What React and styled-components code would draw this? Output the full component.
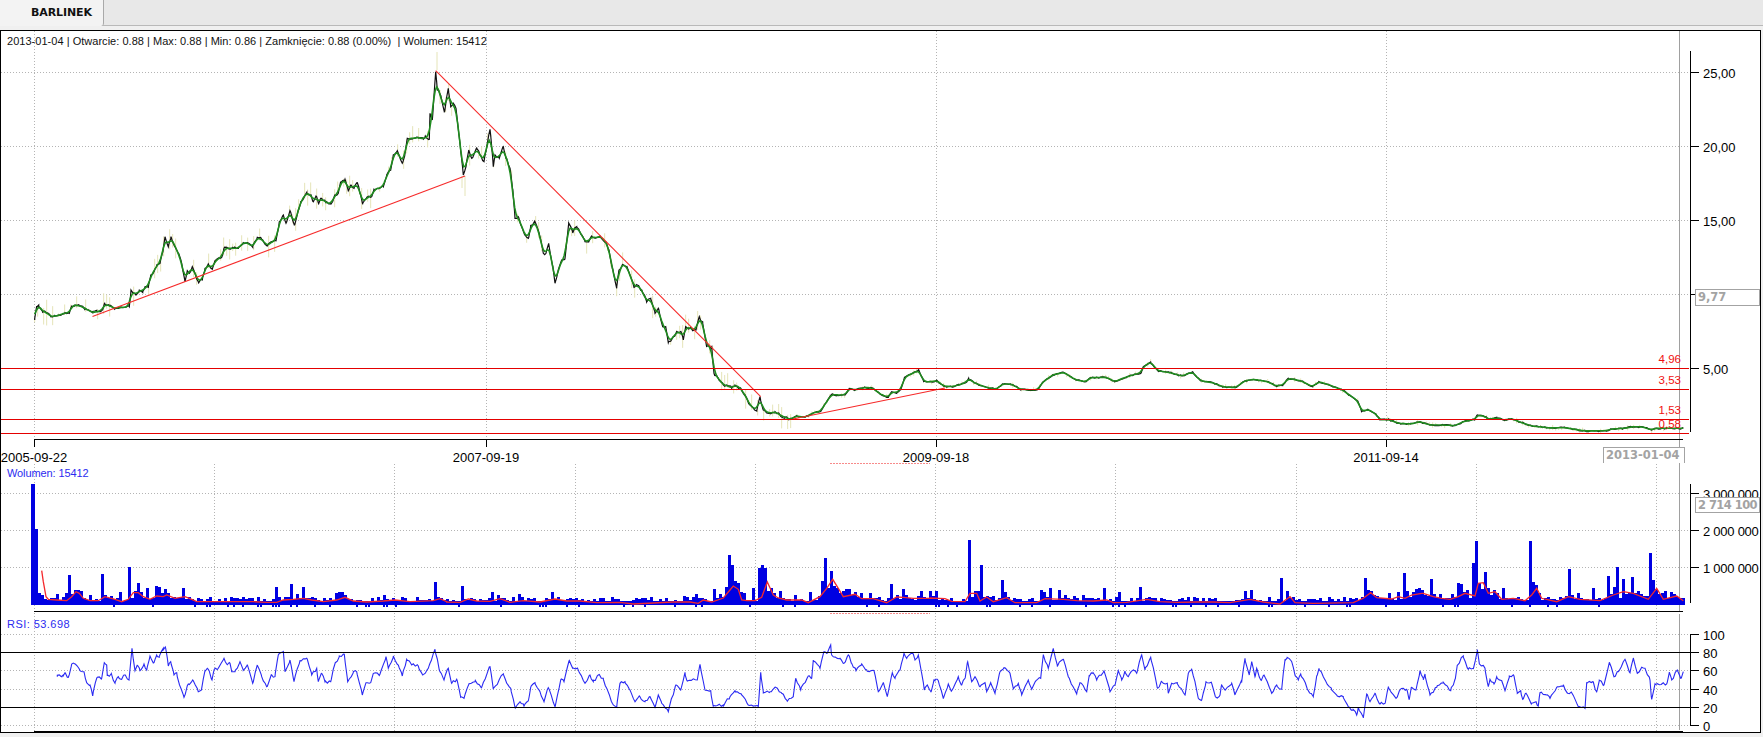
import React from 'react';
import styled, { createGlobalStyle } from 'styled-components';

const GlobalStyle = createGlobalStyle`
  html, body {
    margin: 0;
    padding: 0;
    background: #f0f0f0;
    overflow: hidden;
  }
`;

const LABEL_FONT = '"Liberation Sans", Arial, sans-serif';
const BOLD_FONT = '"DejaVu Sans", Verdana, sans-serif';

// traced points are written in the coordinates of a crop, trace() brings them back to the page
const trace = (ox, oy, pts, sx = 3) =>
  pts
    .trim()
    .split(/\s+/)
    .map(p => {
      const [x, y] = p.split(',').map(Number);
      return [ox + x / sx, oy + y / 3];
    });

const PRICE = [
  ...trace(30, 60, `14,780 20,738 26,735 38,755 50,758 62,770 75,768 90,765 105,758 118,760 125,738 135,735 150,738 165,745 188,758 200,755 215,752 224,732 240,738 255,745 275,742 298,740 303,690 310,698 318,705 328,690 338,695 345,680 355,682 362,645 372,635 380,615 390,610 398,575 405,530 415,560 423,530 435,560 445,580 455,610 465,665 472,632 478,640 487,620 495,640 505,665 517,660 525,625 535,612 547,628 555,602 575,592 582,565 595,565 610,565 625,565 640,548 652,548 668,562 682,532 695,538 712,558 725,545 738,542 748,485 760,465 768,490 780,452 793,495 805,450 812,425 830,398 843,405 850,425 858,408 865,428 875,415 888,428 903,432 915,405 925,400 932,368 945,358 955,392 963,375 972,385 982,368 990,400 998,430 1010,412 1025,410 1032,388 1045,385 1060,380 1070,345 1082,330 1090,285 1102,272 1117,310 1125,280 1132,235 1150,235 1165,232 1180,238 1186,228 1198,238 1200,160 1207,180 1217,35 1222,90 1232,105 1243,155 1255,85 1262,140 1270,130 1278,145 1290,250 1300,345 1308,320 1316,270 1325,295 1340,265 1350,285 1362,305 1370,262 1380,208 1390,320 1395,285 1408,295 1420,260 1428,295 1440,325`),
  ...trace(440, 110, `218,240 225,325 235,320 245,350 255,375 265,385 272,350 285,335 297,368 310,430 318,430 326,400 338,470 345,520 355,480 365,450 375,445 386,340 398,365 410,350 425,375 435,395 445,395 455,378 465,385 480,378 497,395 507,420 518,480 530,535 537,480 548,462 560,470 570,495 582,532 592,525 605,540 620,575 632,565 645,610 655,595 668,650 677,650 685,698 700,680 712,665 722,665 730,690 737,650 750,655 768,660 778,620 788,640 800,708 815,710 822,790 835,805 850,825 865,828 875,835 885,825 900,833`),
  ...trace(450, 280, `885,345 900,375 920,392 930,350 940,390 960,400 975,395 990,405 1005,412 1020,418 1040,408 1065,412 1090,398 1110,395 1130,365 1145,343 1160,345 1185,345 1198,325 1215,330 1245,322 1270,325 1290,342 1315,352 1325,335 1340,338 1350,330`),
  ...trace(780, 340, `297,145 305,112 325,100 340,90 352,125 370,125 385,122 400,138 420,140 438,135 455,128 462,115 475,128 500,140 530,148 545,132 565,132 590,148 630,150 645,125 668,105 695,97 725,120 750,125 760,113 800,112 820,125 850,110 885,98 890,80 908,66 925,92 955,98 985,108 1010,96 1030,122 1060,128 1085,140 1115,143 1140,122 1160,118 1195,125 1215,138 1232,135 1245,115 1275,122 1305,140 1320,125 1345,135 1375,148 1395,165 1415,182 1425,215 1440,208 1460,222 1470,240 1490,238 1515,250 1545,252`, 2.45),
  ...trace(1400, 300, `60,365 90,375 130,375 165,377 190,365 225,358 232,345 258,350 265,358 290,354 315,360 335,356 365,368 395,378 415,380 450,384 495,383 555,393 620,392 635,387 670,385 700,380 730,381 755,390 765,385 850,385`),
];

const VOLUME_MA = [
  ...trace(0, 540, `125,92 130,125 138,170 145,178 170,180 200,182 215,170 228,155 238,160 250,175 270,182 295,182 315,170 345,178 365,185 385,178 400,158 415,158 430,170 450,178 470,168 490,170 500,165 525,175 555,170 575,178 590,185 650,185 700,185 760,185 800,187 830,187 850,180 880,178 910,175 935,180 970,185 1010,180 1035,172 1060,183 1100,186 1150,183 1185,180 1230,185 1300,182 1320,176 1340,185`),
  ...trace(440, 500, `20,306 60,307 85,297 110,303 150,304 180,296 210,307 250,302 300,306 345,297 380,303 420,303 470,308 540,307 580,312 640,309 700,306 750,306 775,310 790,300 815,306 850,294 870,270 880,258 895,268 905,300 920,302 945,302 965,292 982,246 1000,285 1015,294 1040,300 1085,300 1105,308 1140,290 1160,265 1178,238 1195,265 1210,290 1245,283 1265,296 1300,296 1340,308 1370,291 1390,292 1420,295 1470,295`),
  ...trace(930, 500, `0,294 45,296 65,304 105,305 120,280 140,280 150,303 170,291 190,305 230,293 255,308 320,308 345,296 400,298 440,302 490,303 530,300 550,308 590,307 650,298 690,305 740,307 800,306 850,306 900,308 960,298 1000,306 1050,312 1080,290 1095,308 1150,310 1270,308 1300,295 1322,278 1340,293 1385,297 1405,290 1425,295 1445,285 1475,280`),
  ...trace(1400, 530, `70,190 100,200 125,205 150,208 175,200 195,190 225,198 235,160 250,158 265,190 285,185 305,208 340,205 375,212 395,195 410,175 425,205 470,215 505,200 540,208 600,212 640,195 670,185 700,190 745,208 770,175 790,208 830,198 850,212`),
];

const VOLUME_SPIKES = [
  ...trace(0, 540, `115,160 125,165 172,162 200,160 212,105 222,155 235,160 275,165 308,102 320,165 365,155 392,82 414,128 425,160 441,145 470,138 482,142 492,148 505,160 550,145 565,170 680,178 715,175 830,142 875,132 893,162 908,142 935,172 1005,160 1015,155 1030,155 1155,165 1305,126 1345,182`),
  ...trace(440, 500, `68,258 158,276 178,285 218,292 240,282 275,298 320,294 338,276 412,295 430,298 460,298 494,295 527,298 622,300 680,295 730,288 742,290 773,282 795,298 825,268 840,282 858,262 870,165 877,195 915,280 942,264 960,205 966,195 976,205 996,275 1025,274 1062,285 1115,276 1143,243 1152,204 1158,175 1170,213 1183,258 1195,265 1218,268 1230,268 1245,280 1265,280 1288,280 1352,252 1370,285 1387,268 1400,285 1445,274 1468,274 1490,274`),
  ...trace(930, 500, `5,285 20,274 116,120 152,195 192,288 216,240 226,276 270,300 305,300 332,270 342,275 365,264 390,270 408,285 432,288 462,285 527,264 566,276 603,295 632,261 660,291 680,295 705,298 798,295 850,297 860,295 915,300 942,273 962,270 1058,234 1070,274 1165,300 1272,302 1305,234 1315,270 1340,288 1380,280 1405,276 1425,219 1435,274 1460,266 1470,264`),
  ...trace(1400, 530, `15,128 50,176 62,174 95,146 125,192 158,192 172,160 182,162 205,180 218,100 227,33 257,126 268,175 308,174 350,208 390,33 400,155 410,198 505,116 510,182 533,188 580,174 622,138 640,170 656,112 670,148 696,140 712,184 750,68 760,150 770,190 800,184 815,186 830,200`),
];

const RSI = [
  ...trace(0, 540, `172,410 190,405 195,398 205,412 215,372 225,372 240,392 252,395 260,428 270,435 278,468 290,415 305,415 313,368 320,375 322,408 333,402 345,430 355,410 365,418 372,405 387,420 396,325 405,392 412,375 420,392 432,372 440,390 450,348 462,368 470,345 478,352 490,325 497,325 505,378 512,365 522,405 530,398 538,432 552,472 565,432 578,420 595,455 605,445 615,392 625,388 636,420 643,388 655,385 672,355 680,372 690,370 695,395 705,395 720,365 730,390 742,375 758,430 772,375 785,410 800,440 815,405 825,410 835,345 850,335 855,395 870,360 882,425 900,362 920,355 935,405 950,385 955,425 965,400 975,425 992,425 1003,378 1018,350 1033,343 1043,425 1060,398 1070,395 1087,465 1098,428 1112,428 1120,400 1140,402 1158,350 1165,385 1180,352 1195,375 1207,408 1220,358 1235,375 1255,378 1268,405 1285,385 1290,370 1305,328 1320,395 1332,420`),
  ...trace(440, 500, `25,505 35,550 50,538 62,592 72,595 88,550 105,545 125,562 150,500 160,568 190,522 200,550 212,565 225,622 240,605 252,618 265,603 272,562 285,548 300,575 312,605 325,563 345,620 362,540 372,545 387,483 398,505 412,505 435,550 450,525 460,545 475,525 490,535 500,565 517,610 530,622 540,550 555,545 570,570 585,605 600,590 615,605 630,590 645,622 655,585 665,610 685,635 697,590 708,555 722,570 735,517 740,540 772,540 780,493 795,570 812,572 820,620 850,615 870,590 885,572 905,585 925,615 955,620 962,517 970,575 990,575 1005,562 1025,580 1040,600 1060,590 1067,535 1082,570 1105,528 1115,535 1120,480 1140,505 1152,455 1160,460 1172,435 1175,465 1200,475 1212,490 1225,465 1235,490 1248,512 1265,492 1280,510 1302,512 1315,575 1330,548 1342,590 1357,518 1365,535 1380,510 1392,460 1400,475 1418,460 1425,480 1435,465 1445,520 1453,570 1462,555 1473,575 1482,540`),
  ...trace(930, 500, `15,542 25,542 40,595 55,552 65,572 85,530 95,555 105,535 113,485 125,545 135,530 150,560 165,548 170,575 182,548 195,580 210,515 222,503 240,520 250,565 265,550 275,585 295,540 305,568 320,540 332,535 340,465 355,505 370,445 382,495 400,478 415,530 440,582 450,548 470,575 478,525 490,520 500,540 522,513 540,575 555,555 565,512 575,540 585,513 595,530 610,510 620,520 635,465 645,510 662,472 683,565 695,545 712,550 715,580 725,550 742,548 765,585 775,520 785,508 795,545 805,595 815,600 828,545 845,550 858,592 870,585 875,555 885,570 905,550 915,585 935,545 945,475 958,525 965,485 975,530 980,505 992,540 1002,525 1025,580 1040,555 1055,568 1065,480 1072,473 1085,485 1095,525 1105,540 1112,522 1140,580 1150,590 1160,528 1167,505 1185,540 1205,570 1220,585 1240,590 1255,620 1270,630 1280,645 1285,622 1300,652 1310,582 1320,605 1335,580 1350,612 1365,610 1375,562 1398,595 1410,570 1430,568 1437,598 1445,562 1458,570 1470,512 1480,535`),
  ...trace(1400, 530, `75,432 90,495 110,472 130,458 152,482 165,448 172,405 190,378 205,418 220,415 232,362 238,400 255,415 265,470 270,448 282,462 290,440 305,452 315,482 328,442 342,438 352,488 362,482 368,508 378,490 395,520 408,515 415,528 420,488 440,495 450,505 470,472 490,468 503,490 515,488 535,530 555,535 560,458 578,455 590,485 598,452 612,465 628,398 642,440 655,425 675,388 690,428 700,385 712,430 725,412 735,415 750,450 755,508 765,462 785,462 800,462 808,428 815,450 832,420 842,445 850,425`),
];

const random = seed => () => {
  seed = (seed * 16807) % 2147483647;
  return (seed - 1) / 2147483646;
};

const toPoints = pts => pts.map(([x, y]) => `${x.toFixed(1)},${y.toFixed(1)}`).join(' ');

const yAt = (pts, x) => {
  if (x <= pts[0][0]) return pts[0][1];
  for (let i = 1; i < pts.length; i++) {
    if (pts[i][0] >= x) {
      const [x0, y0] = pts[i - 1];
      const [x1, y1] = pts[i];
      return x1 === x0 ? y1 : y0 + ((y1 - y0) * (x - x0)) / (x1 - x0);
    }
  }
  return pts[pts.length - 1][1];
};

const resample = (pts, step) => {
  const out = [];
  for (let x = pts[0][0]; x <= pts[pts.length - 1][0]; x += step) out.push([x, yAt(pts, x)]);
  return out;
};

const smooth = (pts, reach) =>
  pts.map(([x], i) => {
    let sum = 0;
    let weight = 0;
    for (let k = -reach; k <= reach; k++) {
      const p = pts[i + k];
      if (!p) continue;
      const w = reach + 1 - Math.abs(k);
      sum += p[1] * w;
      weight += w;
    }
    return [x, sum / weight];
  });

// samples get a little noise, the traced corners stay where they are so the peaks are kept
const roughen = (pts, seed, step, size) => {
  const rnd = random(seed);
  const noisy = resample(pts, step).map(([x, y]) => [x, y + (rnd() - 0.5) * size(x)]);
  return [...pts, ...noisy].sort((a, b) => a[0] - b[0]);
};

const priceSamples = resample(PRICE, 1.5);
const priceGreen = smooth(priceSamples, 2);
const priceBlack = roughen(PRICE, 311, 2, x => (x < 790 ? 3 : 1.5));
const rsiLine = roughen(RSI, 913, 2, () => 3);

const wicks = (() => {
  const rnd = random(77);
  const list = [];
  priceSamples.forEach(([x, y], i) => {
    if (i % 2 || rnd() > 0.55) return;
    const size = x < 800 ? 13 : 3;
    list.push([x, y - rnd() * size, y + rnd() * size]);
  });
  list.push([437, 52, 70], [465, 176, 196], [462, 176, 188], [440, 90, 104]);
  return list;
})();

const volumeBars = (() => {
  const rnd = random(4242);
  const bars = [];
  for (let x = 38; x < 1683; x += 3) {
    const ma = 605 - yAt(VOLUME_MA, Math.max(x, 50));
    const bump = rnd() < 0.45 ? 1 + rnd() * 3 : 0;
    const top = 605 - Math.max(4 + bump, Math.min(ma, 20) * (0.6 + rnd() * 0.8));
    bars.push({ x, top, nub: rnd() < 0.16 && x > 110 && ma < 8 });
  }
  VOLUME_SPIKES.forEach(([x, top]) => {
    const bar = bars[Math.max(0, Math.round((x - 39.5) / 3))];
    if (bar) bar.top = Math.min(bar.top, top);
  });
  return bars;
})();

const PRICE_TICKS = [
  { y: 72, label: '25,00' },
  { y: 146, label: '20,00' },
  { y: 220, label: '15,00' },
  { y: 294, label: '' },
  { y: 368, label: '5,00' },
];
const LEVELS = [
  { y: 368, label: '4,96', labelY: 359 },
  { y: 389, label: '3,53', labelY: 380 },
  { y: 419, label: '1,53', labelY: 410 },
  { y: 433, label: '0,58', labelY: 424 },
];
const DATE_TICKS = [
  { x: 34, label: '2005-09-22' },
  { x: 486, label: '2007-09-19' },
  { x: 936, label: '2009-09-18' },
  { x: 1386, label: '2011-09-14' },
];
const LOWER_GRID_X = [34, 214, 394, 575, 755, 935, 1115, 1296, 1476, 1656];
const VOLUME_TICKS = [
  { y: 493, label: '3 000 000' },
  { y: 530, label: '2 000 000' },
  { y: 567, label: '1 000 000' },
];
const RSI_TICKS = [
  { y: 634, label: '100' },
  { y: 652, label: '80' },
  { y: 670, label: '60' },
  { y: 689, label: '40' },
  { y: 707, label: '20' },
  { y: 725, label: '0' },
];

const Screen = styled.div`
  width: 1763px;
  height: 737px;
  background: #f0f0f0;
  display: flex;
  flex-direction: column;
`;

const TabBar = styled.div`
  height: 25px;
  flex: none;
  background: #e8e8e8;
  border-bottom: 1px solid #b9b9b9;
  display: flex;
`;

const Tab = styled.div`
  width: 72px;
  height: 26px;
  padding-left: 31px;
  background: #f3f3f3;
  border-right: 1px solid #a9a9a9;
  border-bottom-right-radius: 3px;
  font: bold 11px/26px ${BOLD_FONT};
  letter-spacing: -0.1px;
  color: #111;
`;

const ChartFrame = styled.div`
  margin: 4px 2px 0 0;
  height: 701px;
  flex: none;
  background: #fff;
  border: 1px solid #000;
  position: relative;
  overflow: hidden;
  display: flex;
  flex-direction: column;
`;

const Pane = styled.div`
  position: relative;
  height: ${props => props.height}px;
  flex: none;
`;

const PaneChart = styled.svg`
  display: block;
  width: 1759px;
  height: 100%;
  overflow: visible;
`;

const AxisText = styled.text`
  font-family: ${LABEL_FONT};
  font-size: 13px;
  fill: #000;
  dominant-baseline: central;
`;

const LevelText = styled(AxisText)`
  font-size: 11.5px;
  fill: #f01010;
  text-anchor: end;
`;

const Crisp = styled.g`
  shape-rendering: crispEdges;
`;

const Legend = styled.div`
  position: absolute;
  left: ${props => props.left}px;
  top: ${props => props.top}px;
  font: 11px/13px ${LABEL_FONT};
  color: ${props => props.color};
  letter-spacing: ${props => props.spacing || 0}px;
  white-space: pre;
`;

const ValueBox = styled.div`
  position: absolute;
  right: ${props => props.right}px;
  top: ${props => props.top}px;
  width: ${props => props.width}px;
  height: ${props => props.height}px;
  box-sizing: border-box;
  background: #fff;
  border: 1px solid #a3a3a3;
  ${props => props.open && 'border-bottom: 0;'}
  padding-left: 2px;
  font: bold 11.5px/${props => props.height - 2}px ${BOLD_FONT};
  letter-spacing: ${props => props.spacing || 0}px;
  color: #a3a3a3;
  white-space: nowrap;
  overflow: hidden;
`;

function Grid({ xs, ys, top, bottom }) {
  return (
    <Crisp stroke="#b4b4b4" strokeDasharray="1 2">
      {xs.map(x => (
        <line key={`v${x}`} x1={x + 0.5} x2={x + 0.5} y1={top} y2={bottom} />
      ))}
      {ys.map(y => (
        <line key={`h${y}`} x1="1" x2="1690" y1={y + 0.5} y2={y + 0.5} />
      ))}
    </Crisp>
  );
}

function YAxis({ ticks, top, bottom, tight }) {
  return (
    <>
      <Crisp stroke="#000">
        <line x1="1690.5" x2="1690.5" y1={top} y2={bottom} />
        {ticks.map(t => (
          <line key={t.y} x1="1690" x2="1699" y1={t.y + 0.5} y2={t.y + 0.5} />
        ))}
      </Crisp>
      {ticks.map(t => (
        <AxisText key={t.y} x="1703" y={t.y + 1} letterSpacing={tight}>
          {t.label}
        </AxisText>
      ))}
    </>
  );
}

function PricePanel() {
  return (
    <PaneChart viewBox="1 31 1759 432" preserveAspectRatio="none">
      <Grid xs={DATE_TICKS.map(t => t.x)} ys={[72, 146, 220, 294]} top="31" bottom="439" />
      <Crisp stroke="#a0a0a0">
        <line x1="1679.5" x2="1679.5" y1="31" y2="463" />
      </Crisp>
      <g stroke="#e5e4b8" strokeWidth="1">
        {wicks.map(([x, y1, y2], i) => (
          <line key={i} x1={x} x2={x} y1={y1} y2={y2} />
        ))}
      </g>
      <polyline points={toPoints(priceBlack)} fill="none" stroke="#111" strokeWidth="1.2" />
      <polyline points={toPoints(priceGreen)} fill="none" stroke="#1f8c1f" strokeWidth="1.6" />
      <g stroke="#f62a2a" strokeWidth="1.1">
        <line x1="92.5" y1="316.5" x2="465" y2="176" />
        <line x1="435.7" y1="70.7" x2="760.7" y2="396.7" />
        <line x1="793" y1="419" x2="945" y2="388" />
      </g>
      <Crisp stroke="#e40000">
        {LEVELS.map(l => (
          <line key={l.y} x1="1" x2="1689" y1={l.y + 0.5} y2={l.y + 0.5} />
        ))}
      </Crisp>
      {LEVELS.map(l => (
        <LevelText key={l.y} x="1681" y={l.labelY}>
          {l.label}
        </LevelText>
      ))}
      <YAxis ticks={PRICE_TICKS} top="51" bottom="432" />
      <Crisp stroke="#000">
        <line x1="34" x2="1683" y1="439.5" y2="439.5" />
        {DATE_TICKS.map(t => (
          <line key={t.x} x1={t.x + 0.5} x2={t.x + 0.5} y1="439" y2="447" />
        ))}
      </Crisp>
      {DATE_TICKS.map(t => (
        <AxisText key={t.x} x={t.x} y="457" textAnchor="middle">
          {t.label}
        </AxisText>
      ))}
    </PaneChart>
  );
}

function VolumePanel() {
  return (
    <PaneChart viewBox="1 463 1759 150" preserveAspectRatio="none">
      <Grid xs={LOWER_GRID_X} ys={VOLUME_TICKS.map(t => t.y)} top="464" bottom="613" />
      <Crisp stroke="#a0a0a0">
        <line x1="1679.5" x2="1679.5" y1="463" y2="611" />
      </Crisp>
      <Crisp stroke="#f78a8a" strokeDasharray="2 1">
        <line x1="830" x2="930" y1="463.5" y2="463.5" />
      </Crisp>
      <Crisp fill="#0000e2">
        <rect x="31" y="484" width="4" height="121" />
        <rect x="35" y="529" width="3" height="76" />
        {volumeBars.map(b => (
          <rect key={b.x} x={b.x} y={Math.round(b.top)} width="3" height={605 - Math.round(b.top)} />
        ))}
        {volumeBars
          .filter(b => b.nub)
          .map(b => (
            <rect key={`n${b.x}`} x={b.x} y="605" width="2" height="2" />
          ))}
      </Crisp>
      <polyline points={toPoints(VOLUME_MA)} fill="none" stroke="#f4282c" strokeWidth="1.3" />
      <YAxis ticks={VOLUME_TICKS} top="484" bottom="603" tight="-0.25" />
      <Crisp stroke="#000">
        <line x1="34" x2="1683" y1="611.5" y2="611.5" />
      </Crisp>
    </PaneChart>
  );
}

function RsiPanel() {
  return (
    <PaneChart viewBox="1 613 1759 119" preserveAspectRatio="none">
      <Grid xs={LOWER_GRID_X} ys={[634, 670, 689, 725]} top="613" bottom="731" />
      <Crisp stroke="#a0a0a0">
        <line x1="1679.5" x2="1679.5" y1="614" y2="730" />
      </Crisp>
      <Crisp stroke="#f78a8a" strokeDasharray="2 1">
        <line x1="830" x2="930" y1="613.5" y2="613.5" />
      </Crisp>
      <polyline points={toPoints(rsiLine)} fill="none" stroke="#2a2af2" strokeWidth="1.1" />
      <Crisp stroke="#000">
        <line x1="1" x2="1690" y1="652.5" y2="652.5" />
        <line x1="1" x2="1690" y1="707.5" y2="707.5" />
        <line x1="34" x2="1683" y1="731.5" y2="731.5" />
      </Crisp>
      <YAxis ticks={RSI_TICKS} top="634" bottom="726" />
    </PaneChart>
  );
}

export default function App() {
  return (
    <Screen>
      <GlobalStyle />
      <TabBar>
        <Tab>BARLINEK</Tab>
      </TabBar>
      <ChartFrame>
        <Pane height={432}>
          <PricePanel />
          <Legend left={6} top={4} color="#111" spacing={0.03}>
            2013-01-04 | Otwarcie: 0.88 | Max: 0.88 | Min: 0.86 | Zamknięcie: 0.88 (0.00%)  | Wolumen: 15412
          </Legend>
          <ValueBox right={0} top={258} width={65} height={17}>
            9,77
          </ValueBox>
          <ValueBox right={75} top={416} width={82} height={16} open>
            2013-01-04
          </ValueBox>
        </Pane>
        <Pane height={150}>
          <VolumePanel />
          <Legend left={6} top={4} color="#2b2bf0" spacing={-0.1}>
            Wolumen: 15412
          </Legend>
          <ValueBox right={0} top={34} width={65} height={16} spacing={-0.55}>
            2 714 100
          </ValueBox>
        </Pane>
        <Pane height={119}>
          <RsiPanel />
          <Legend left={6} top={5} color="#2b2bf0" spacing={0.45}>
            RSI: 53.698
          </Legend>
        </Pane>
      </ChartFrame>
    </Screen>
  );
}
